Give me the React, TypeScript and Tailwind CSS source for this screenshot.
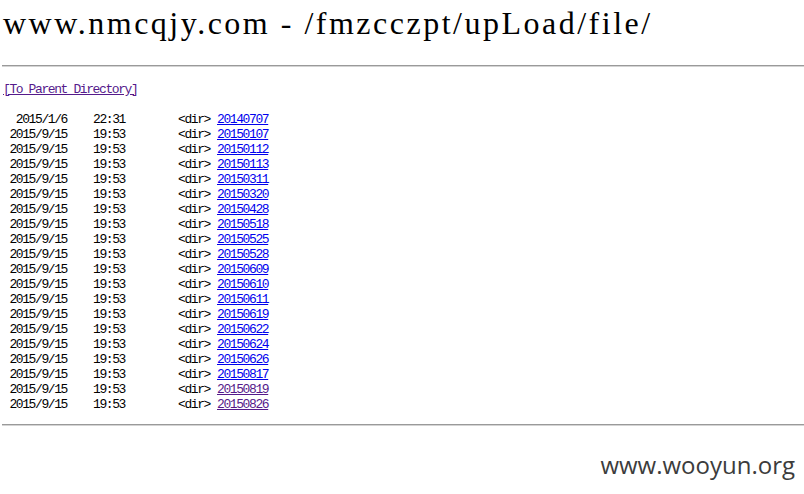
import React from 'react';

const rows = [
  { date: '2015/1/6', time: '22:31', name: '20140707', visited: false },
  { date: '2015/9/15', time: '19:53', name: '20150107', visited: false },
  { date: '2015/9/15', time: '19:53', name: '20150112', visited: false },
  { date: '2015/9/15', time: '19:53', name: '20150113', visited: false },
  { date: '2015/9/15', time: '19:53', name: '20150311', visited: false },
  { date: '2015/9/15', time: '19:53', name: '20150320', visited: false },
  { date: '2015/9/15', time: '19:53', name: '20150428', visited: false },
  { date: '2015/9/15', time: '19:53', name: '20150518', visited: false },
  { date: '2015/9/15', time: '19:53', name: '20150525', visited: false },
  { date: '2015/9/15', time: '19:53', name: '20150528', visited: false },
  { date: '2015/9/15', time: '19:53', name: '20150609', visited: false },
  { date: '2015/9/15', time: '19:53', name: '20150610', visited: false },
  { date: '2015/9/15', time: '19:53', name: '20150611', visited: false },
  { date: '2015/9/15', time: '19:53', name: '20150619', visited: false },
  { date: '2015/9/15', time: '19:53', name: '20150622', visited: false },
  { date: '2015/9/15', time: '19:53', name: '20150624', visited: false },
  { date: '2015/9/15', time: '19:53', name: '20150626', visited: false },
  { date: '2015/9/15', time: '19:53', name: '20150817', visited: false },
  { date: '2015/9/15', time: '19:53', name: '20150819', visited: true },
  { date: '2015/9/15', time: '19:53', name: '20150826', visited: true },
];

const App = () => {
  return (
    <div className="relative w-[804px] h-[494px] bg-white text-black overflow-hidden">
      {/* Title */}
      <h1 className="mt-[7px] ml-[3px] text-[32px] leading-[32px] tracking-[2.5px] font-normal font-['Liberation_Serif',serif] whitespace-pre">
        www.nmcqjy.com - /fmzcczpt/upLoad/file/
      </h1>

      <div className="mt-[26px] ml-[2px] h-[2px] border-t border-[#9a9a9a] border-b border-b-[#d4d4d4]" />

      {/* Listing */}
      <div className="font-['Liberation_Mono',monospace] text-[13px] leading-[15px] tracking-[-1.4px]">
        <div className="mt-[15px] ml-[3px]">
          <a href="#" className="text-[#551a8b] underline">[To Parent Directory]</a>
        </div>

        <div className="mt-[15px] flex flex-col">
          {rows.map((row, i) => (
            <div key={i} className="grid grid-cols-[67px_111px_39px_auto] h-[15px] whitespace-pre">
              <span className="text-right">{row.date}</span>
              <span className="pl-[26px]">{row.time}</span>
              <span>&lt;dir&gt;</span>
              <a
                href="#"
                className={`underline ${row.visited ? 'text-[#551a8b]' : 'text-[#0000ee]'}`}
              >
                {row.name}
              </a>
            </div>
          ))}
        </div>
      </div>

      <div className="mt-[12px] ml-[2px] h-[2px] border-t border-[#9a9a9a] border-b border-b-[#d4d4d4]" />

      {/* watermark */}
      <div className="absolute right-[9px] top-[453px] text-[24px] leading-[24px] text-[#3c3c3c] font-['Open_Sans',sans-serif]">
        www.wooyun.org
      </div>
    </div>
  );
};

export default App;
